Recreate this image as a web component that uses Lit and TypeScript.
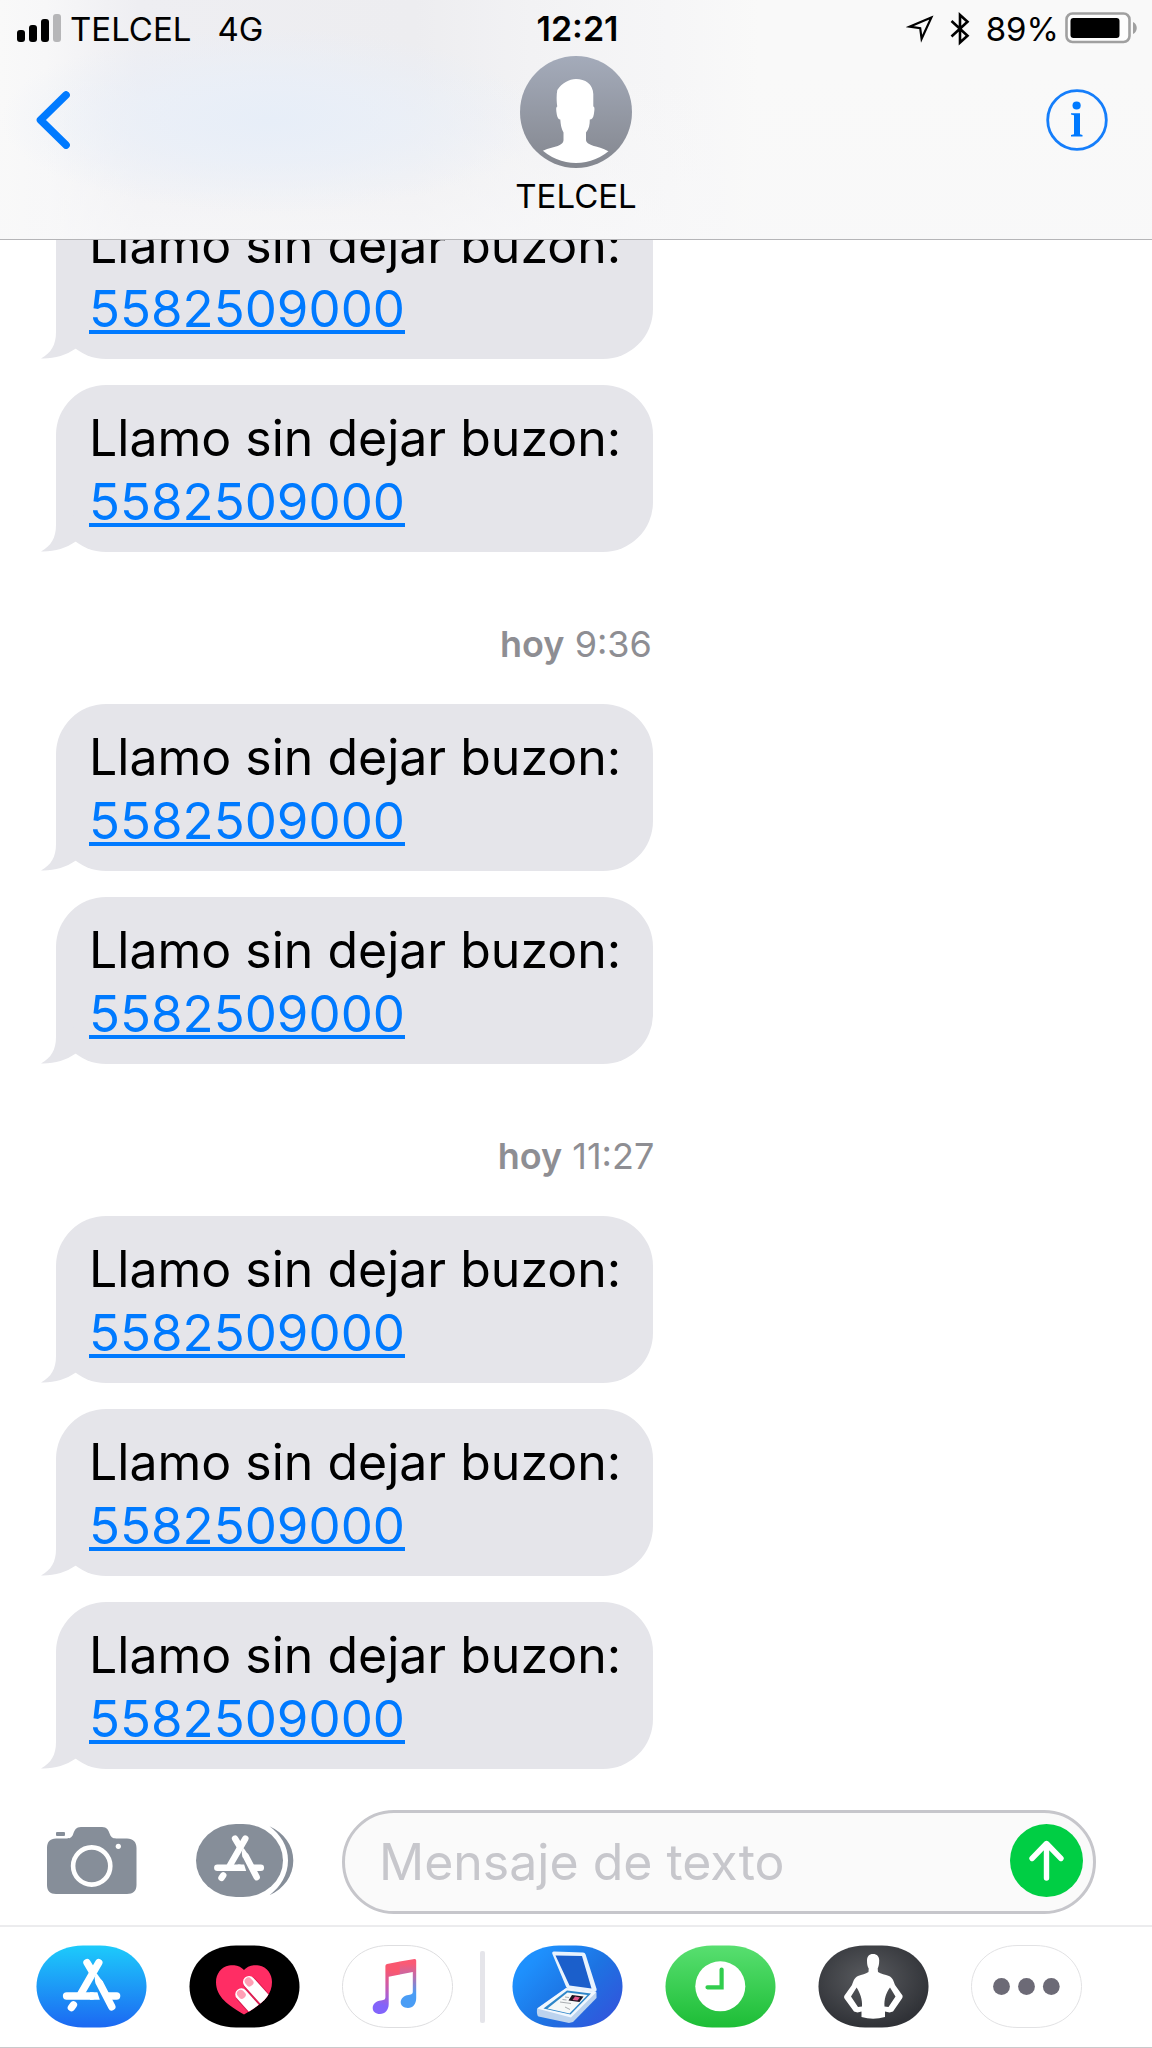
import { LitElement, html, css, svg } from "lit";
import { customElement, property } from "lit/decorators.js";

interface MessageGroup {
  day: string;
  time: string;
  messages: { text: string; phone: string }[];
}

const missedCall = { text: "Llamo sin dejar buzon:", phone: "5582509000" };

const conversation: MessageGroup[] = [
  { day: "", time: "", messages: [missedCall, missedCall] },
  { day: "hoy", time: "9:36", messages: [missedCall, missedCall] },
  { day: "hoy", time: "11:27", messages: [missedCall, missedCall, missedCall] },
];

/* Shared "A" glyph made of three crossing sticks, in 111x83 coordinates. */
const storeGlyph = svg`
  <g fill="none" stroke="#fff" stroke-width="7.4" stroke-linecap="round">
    <path d="M62.8 17.6 45 48.5" />
    <path d="M51 17.6 56 26" />
    <path d="M63.5 38 75.8 61.8" />
    <path d="M30.6 51H56" />
    <path d="M73 51H80.6" />
    <path d="M37.4 59.8 35.4 62.6" />
  </g>
  <path d="M54 47.3H61.4L63.8 54.7H54Z" fill="#fff" />
  <path d="M60.3 28.6C58.2 31.5 58.4 35.5 60 39.6L67 37.3 61 28.8Z" fill="#fff" />`;

@customElement("status-bar")
export class StatusBar extends LitElement {
  static styles = css`
    :host {
      display: grid;
      grid-template-columns: 1fr auto 1fr;
      align-items: center;
      box-sizing: border-box;
      height: 56px;
      padding: 2px 14px 0 17px;
      font-size: 33px;
      line-height: 40px;
      color: #000;
    }
    svg {
      display: block;
    }
    .left,
    .right {
      display: flex;
      align-items: center;
    }
    .left {
      gap: 8px;
    }
    .network {
      margin-left: 18px;
    }
    .clock {
      font-size: 34px;
      font-weight: 600;
    }
    .right {
      justify-content: flex-end;
      gap: 6px;
    }
    .arrow {
      margin-right: 10px;
    }
    .bluetooth {
      margin-right: 10px;
    }
  `;

  render() {
    return html`
      <div class="left">
        <svg width="45" height="30" viewBox="0 0 45 30" aria-hidden="true">
          <rect x="0" y="16" width="8" height="12" rx="3" />
          <rect x="12" y="11" width="8" height="17" rx="3" />
          <rect x="24" y="5" width="8" height="23" rx="3" />
          <rect x="36" y="0" width="8" height="28" rx="3" fill="#b6b6b8" />
        </svg>
        <span>TELCEL</span>
        <span class="network">4G</span>
      </div>
      <span class="clock">12:21</span>
      <div class="right">
        <svg class="arrow" width="28" height="28" viewBox="0 0 28 28" aria-hidden="true">
          <path d="M25.3 2.6 3.5 11.7 14.2 13.2 15.6 23.8Z" fill="none" stroke="#000" stroke-width="2.2" />
        </svg>
        <svg class="bluetooth" width="20" height="34" viewBox="0 0 20 34" aria-hidden="true">
          <path d="M1.5 9 17.5 23.7 10 30.5V3L17.5 9.7 1.5 24.5" fill="none" stroke="#000" stroke-width="2.6" />
        </svg>
        <span>89%</span>
        <svg width="73" height="34" viewBox="0 0 73 34" aria-hidden="true">
          <rect x="1.5" y="1.5" width="63" height="28.5" rx="6" fill="#fdfdfd" stroke="#a0a0a0" stroke-width="2.6" />
          <rect x="5.5" y="6" width="49" height="20" rx="3" />
          <path d="M68 10C73 12 73 20 68 22Z" fill="#a0a0a0" />
        </svg>
      </div>
    `;
  }
}

@customElement("chat-header")
export class ChatHeader extends LitElement {
  static styles = css`
    :host {
      display: block;
      border-bottom: 1px solid #b5b5b8;
      background:
        radial-gradient(ellipse 270px 92px at 270px 120px, #e7eef8 0%, #e9eff8cc 45%, #f0f1f600 100%),
        linear-gradient(to bottom, #f8f8f900 30%, #f8f8f9bb 100%),
        linear-gradient(to right, #f9f9f9 0%, #f7f7f8 4%, #eeeef2 12%, #ededf0 36%, #f2f2f4 46%, #f6f6f7 58%, #f9f9f9 66%);
    }
    svg {
      display: block;
    }
    .nav {
      display: grid;
      grid-template-columns: 1fr auto 1fr;
      padding: 0 44px 23px 36px;
    }
    button {
      display: flex;
      align-items: center;
      height: 128px;
      padding: 0;
      border: 0;
      background: none;
    }
    .info {
      justify-self: end;
    }
    .contact {
      display: flex;
      flex-direction: column;
      align-items: center;
      gap: 8px;
      margin-left: 8px;
    }
    .name {
      margin: 0;
      font-size: 33px;
      font-weight: 400;
      line-height: 40px;
      color: #000;
    }
  `;

  render() {
    return html`
      <status-bar></status-bar>
      <div class="nav">
        <button class="back" aria-label="Atrás">
          <svg width="34" height="58" viewBox="0 0 34 58">
            <path d="M30 4 4.5 29 30 54" fill="none" stroke="#007aff" stroke-width="7.6" stroke-linecap="round" stroke-linejoin="round" />
          </svg>
        </button>
        <div class="contact">
          <svg width="112" height="112" viewBox="0 0 112 112" aria-hidden="true">
            <defs>
              <linearGradient id="sky" x1="0" y1="0" x2="0" y2="1">
                <stop offset="0" stop-color="#a4abba" />
                <stop offset="1" stop-color="#84878f" />
              </linearGradient>
              <clipPath id="ring"><circle cx="56" cy="56" r="51" /></clipPath>
            </defs>
            <circle cx="56" cy="56" r="56" fill="url(#sky)" />
            <path
              clip-path="url(#ring)"
              d="M56 23C65 23 73 28 73.3 38L73.3 50.5C75 51 74.5 54 73.8 58.5 73.2 62 72 63.5 69.8 63.5 69.8 69 69 73 66 76.5L66 84C66 87 70 89 76 90.5 82 92 87 94 91 97L91 112H19V97C24 93.5 30 92 36 90.5 41 89 43.5 87 43.5 84L43.5 76.5C41.5 73 40.6 69 40.3 63.5 38.5 63.5 37.5 62 36.8 58.5 36 54 35.8 51 37.3 50.5 36.5 46 36.3 39 37.3 34 42 27 49 23 56 23Z"
              fill="#fff"
            />
          </svg>
          <h1 class="name">TELCEL</h1>
        </div>
        <button class="info" aria-label="Información">
          <svg width="62" height="62" viewBox="0 0 62 62">
            <circle cx="31" cy="31" r="29.3" fill="none" stroke="#157efb" stroke-width="2.8" />
            <circle cx="30.6" cy="16.5" r="4.1" fill="#007aff" />
            <path d="M25 24.2H34V45.2L36.5 46V47.5H25V46L28 45.2V26.2L25 25.4Z" fill="#007aff" />
          </svg>
        </button>
      </div>
    `;
  }
}

@customElement("message-bubble")
export class MessageBubble extends LitElement {
  @property() text = "";
  @property() phone = "";

  static styles = css`
    :host {
      display: block;
    }
    .bubble {
      position: relative;
      box-sizing: border-box;
      width: fit-content;
      padding: 22px 32px 19px 33px;
      border-radius: 50px;
      background: #e5e5ea;
      font-size: 50px;
      line-height: 63px;
      color: #000;
    }
    p {
      margin: 0;
    }
    .phone {
      font-size: 51px;
    }
    a {
      color: #007aff;
      text-decoration: underline;
      text-decoration-thickness: 4px;
      text-underline-offset: 3px;
      text-decoration-skip-ink: none;
    }
    .tail {
      position: absolute;
      left: -16px;
      bottom: 0;
    }
  `;

  render() {
    return html`
      <div class="bubble">
        <svg class="tail" width="52" height="52" viewBox="0 0 52 52" aria-hidden="true">
          <path d="M16 0V25C16 38 11 46 1 51.5 14 52 26 48 35 42L50 30Z" fill="#e5e5ea" />
        </svg>
        <p>${this.text}</p>
        <p class="phone"><a href="tel:${this.phone}">${this.phone}</a></p>
      </div>
    `;
  }
}

@customElement("compose-bar")
export class ComposeBar extends LitElement {
  static styles = css`
    :host {
      display: block;
    }
    svg {
      display: block;
    }
    form {
      display: flex;
      align-items: center;
      padding: 41px 56px 11px 47px;
    }
    button {
      flex: none;
      padding: 0;
      border: 0;
      background: none;
    }
    .drawer {
      margin: 0 48px 0 59px;
    }
    .field {
      display: flex;
      flex: 1;
      align-items: center;
      box-sizing: border-box;
      min-width: 0;
      height: 104px;
      padding: 0 10px 0 34px;
      border: 3px solid #c6c6cb;
      border-radius: 52px;
      background: #fafafa;
    }
    input {
      flex: 1;
      min-width: 0;
      padding: 0;
      border: 0;
      outline: 0;
      background: none;
      font: inherit;
      font-size: 50px;
      line-height: 64px;
      color: #000;
    }
    input::placeholder {
      color: #c7c7cc;
      opacity: 1;
    }
  `;

  render() {
    return html`
      <form @submit=${(e: Event) => e.preventDefault()}>
        <button type="button" aria-label="Cámara">
          <svg width="90" height="70" viewBox="0 0 90 70">
            <path
              d="M9 11.5H18C23 11.5 24.5 11 26 7.5 27.5 3 29 0 34 0H55C60 0 61.5 3 63 7.5 64.5 11 66 11.5 71 11.5H80C86 11.5 89.5 15 89.5 21V58C89.5 64 86 67 80 67H9C3 67 0 64 0 58V21C0 15 3 11.5 9 11.5Z"
              fill="#868e99"
            />
            <rect x="9" y="5" width="9" height="4" rx="1" fill="#868e99" />
            <circle cx="44.7" cy="39" r="18.6" fill="none" stroke="#fff" stroke-width="4.6" />
            <circle cx="71.3" cy="19.3" r="2.6" fill="#fff" />
          </svg>
        </button>
        <button class="drawer" type="button" aria-label="Apps">
          <svg width="98" height="76" viewBox="0 0 98 76">
            <rect width="87" height="73" rx="40" ry="36.5" fill="#868e99" />
            <path d="M73.5 2.2C88 9 97.3 21 97.3 36.5S88 64.5 73.5 71.2C84.5 62.5 92 51 92 36.5S84.5 10.5 73.5 2.2Z" fill="#868e99" />
            <g transform="translate(-5.3 -0.7) scale(0.87)">${storeGlyph}</g>
          </svg>
        </button>
        <div class="field">
          <input type="text" aria-label="Mensaje de texto" placeholder="Mensaje de texto" />
          <button type="submit" aria-label="Enviar">
            <svg width="73" height="76" viewBox="0 0 73 76">
              <circle cx="36.5" cy="36.5" r="36.5" fill="#00ce44" />
              <path d="M36.5 54V21M22 34.5 36.5 19.5 51 34.5" fill="none" stroke="#fff" stroke-width="5.4" stroke-linecap="round" stroke-linejoin="round" />
            </svg>
          </button>
        </div>
      </form>
    `;
  }
}

const pill = (fill: string, stroke = "none") => svg`
  <path
    d="M47 .5H64C93 .5 110.500 20 110.500 41.500S93 82.500 64 82.500H47C18 82.500 .5 63 .5 41.500S18 .5 47 .5Z"
    fill=${fill}
    stroke=${stroke}
  />`;

@customElement("app-strip")
export class AppStrip extends LitElement {
  static styles = css`
    :host {
      display: flex;
      align-items: center;
      gap: 27px;
      padding: 18px 36px 19px;
      border-top: 2px solid #ececee;
      border-bottom: 1px solid #c9c9cb;
    }
    svg {
      display: block;
    }
    .group {
      display: flex;
      gap: 42px;
    }
    .divider {
      width: 5px;
      height: 72px;
      border-radius: 2px;
      background: #e5e5ea;
    }
    button {
      padding: 0;
      border: 0;
      background: none;
    }
  `;

  private icon(label: string, art: unknown) {
    return html`
      <button aria-label=${label}>
        <svg width="111" height="83" viewBox="0 0 111 83">${art}</svg>
      </button>
    `;
  }

  render() {
    const store = svg`
      <defs>
        <linearGradient id="store" x1="0" y1="0" x2="0" y2="1">
          <stop offset="0" stop-color="#1dcbfb" />
          <stop offset="1" stop-color="#1c68f2" />
        </linearGradient>
      </defs>
      ${pill("url(#store)")}${storeGlyph}`;

    const heart = svg`
      <defs>
        <clipPath id="heart">
          <path d="M55 25C60 19.500 66 20 70 20.500 78 22 83 29 83 37 83 52 71 60 55 69.500 39 60 27 52 27 37 27 29 32 22 40 20.500 44 20 50 19.500 55 25Z" />
        </clipPath>
      </defs>
      ${pill("#000")}
      <g clip-path="url(#heart)">
        <rect x="20" y="15" width="70" height="60" fill="#ff2d64" />
        <g transform="rotate(-42 60 37)">
          <rect x="53" y="32" width="14" height="50" rx="7" fill="#d91d50" />
          <rect x="54" y="31" width="12" height="50" rx="6" fill="#fff" />
          <path d="M56.300 36A3.700 3.700 0 0 1 63.700 36V39A3.700 2.500 0 0 1 56.300 39Z" fill="#ff9fb5" />
          <rect x="39" y="36" width="14" height="50" rx="7" fill="#d91d50" />
          <rect x="40" y="35" width="12" height="50" rx="6" fill="#fff" />
          <path d="M42.300 40A3.700 3.700 0 0 1 49.700 40V43A3.700 2.500 0 0 1 42.300 43Z" fill="#ff9fb5" />
        </g>
      </g>`;

    const music = svg`
      <defs>
        <linearGradient id="noteLeft" gradientUnits="userSpaceOnUse" x1="50" y1="14" x2="36" y2="68">
          <stop offset="0.200" stop-color="#f9576f" />
          <stop offset="0.550" stop-color="#c25cb8" />
          <stop offset="0.850" stop-color="#8264fb" />
        </linearGradient>
        <linearGradient id="noteRight" gradientUnits="userSpaceOnUse" x1="0" y1="14" x2="0" y2="60">
          <stop offset="0.100" stop-color="#fa5a75" />
          <stop offset="0.350" stop-color="#c469a8" />
          <stop offset="0.750" stop-color="#4a9df5" />
        </linearGradient>
      </defs>
      ${pill("#fff", "#dedee0")}
      <path d="M45 19 58 16.500V29.500L46.700 31.800V59C46.700 65 43 69 38 69 33.500 69 30.700 66.500 30.700 63 30.700 59 34 56 39 55.500 42.500 55.200 43.400 54 43.400 52V21Q43.400 19.400 45 19Z" fill="url(#noteLeft)" />
      <path d="M57.800 16.500 72.500 14Q74.200 13.800 74.200 15.500V53C74.200 59 71 63 66 63 61.500 63 58.700 60.500 58.700 57.300 58.700 53.500 62 50.500 66.500 50 70 49.600 70.800 48.500 70.800 46.500V27L57.800 29.500Z" fill="url(#noteRight)" />`;

    const scanner = svg`
      <defs>
        <linearGradient id="scan" x1="0.100" y1="0.300" x2="0.900" y2="0.900">
          <stop offset="0" stop-color="#1e90fd" />
          <stop offset="0.500" stop-color="#1d73e2" />
          <stop offset="1" stop-color="#3156dc" />
        </linearGradient>
      </defs>
      ${pill("url(#scan)")}
      <path d="M42 6.500 71 7.500Q73 7.700 73.600 9.500L84.600 44Q85 47.500 81 47L56.500 44Q55 43.600 54.200 42L40.400 9Q39.600 6.600 42 6.500Z" fill="#e9f3fd" />
      <path d="M43.500 10.500 70 11 79.500 43.500 57.500 40.500Z" fill="#1b5fcb" />
      <path d="M25 64 54 43.500 84.500 47.500V53L61 77 57 78 26.500 71.500Q24.500 70.500 25 64Z" fill="#bcd3ee" />
      <path d="M25 63.500 54 43 84.500 47 59 72.500Z" fill="#f1f7fe" />
      <path d="M31.500 63.500 55 45.500 79 48.500 58.500 69.500Z" fill="#2e86c9" />
      <path d="M35.500 63.500 55.500 47.500 75.500 50 57.500 68.500Z" fill="#f6f8f8" />
      <path d="M60 50 71.500 51.500 67.500 57 56.500 55.500Z" fill="#1c1320" />
      <path d="M63 51.500 68 52.500 65.500 55.500 60.500 55Z" fill="#e4588d" />
      <path d="M53 52 57 52.500M50.500 54.500 54.500 55M48 57 59 58.500M53 62 58 64.500" stroke="#a9adb1" stroke-width="1" />`;

    const clock = svg`
      <defs>
        <linearGradient id="recent" x1="0" y1="0" x2="0" y2="1">
          <stop offset="0" stop-color="#58df70" />
          <stop offset="1" stop-color="#1dbd36" />
        </linearGradient>
      </defs>
      ${pill("url(#recent)")}
      <circle cx="55.300" cy="41.300" r="25" fill="#fff" />
      <path d="M56.600 24.500V42.300H42.500" fill="none" stroke="#31cd4d" stroke-width="4.200" stroke-linecap="round" />`;

    const athlete = svg`
      <defs>
        <radialGradient id="gym" cx="0.450" cy="0.400" r="0.600">
          <stop offset="0" stop-color="#5a5c60" />
          <stop offset="1" stop-color="#303237" />
        </radialGradient>
      </defs>
      ${pill("url(#gym)")}
      <path
        fill="#fff"
        fill-rule="evenodd"
        d="M55 9C59 9 61.200 11.500 61.200 15.500 61.200 19.500 60.500 21.500 59.700 23.500L60 27C63 29 67 29.500 71 31 75 33 75.500 36 77 40L84.500 50.500Q85 52 84 53.500L75 66.500 71.500 67.500 67 66.500 67 72Q55 75.500 43.500 72L43.500 66.500 39.500 67.500 36 66.500 26.500 53.500Q25.500 52 26.500 50.500L34 40C35.500 36 36 33 40 31 44 29.500 47.500 29 50.500 27L50.700 23.500C49.500 21.500 49 19.500 49 15.500 49 11.500 51 9 55 9ZM38.600 42.500 33 51.500 40 62 44 61.500C44.500 54 42 48 38.600 42.500ZM72 42.500C68 48 66 54 66.500 61.500L70.500 62 77.500 51.500Z"
      />`;

    const more = svg`
      ${pill("#fff", "#e2e2e4")}
      <g fill="#6c6a76">
        <circle cx="30.500" cy="41.500" r="8.400" />
        <circle cx="55.500" cy="41.500" r="8.400" />
        <circle cx="80.300" cy="41.500" r="8.400" />
      </g>`;

    return html`
      <div class="group">
        ${this.icon("App Store", store)} ${this.icon("Digital Touch", heart)} ${this.icon("Música", music)}
      </div>
      <div class="divider"></div>
      <div class="group">
        ${this.icon("Escáner", scanner)} ${this.icon("Recientes", clock)} ${this.icon("Ejercicio", athlete)}
        ${this.icon("Más", more)}
      </div>
    `;
  }
}

@customElement("app-root")
export class AppRoot extends LitElement {
  static styles = css`
    :host {
      display: flex;
      flex-direction: column;
      height: 100vh;
      overflow: hidden;
      background: #fff;
      font-family: Inter, "Liberation Sans", sans-serif;
    }
    chat-header,
    compose-bar,
    app-strip {
      flex: none;
    }
    .scroller {
      display: flex;
      flex: 1;
      flex-direction: column-reverse;
      min-height: 0;
      overflow-y: auto;
      scrollbar-width: none;
    }
    .thread {
      flex: none;
    }
    .group {
      display: flex;
      flex-direction: column;
      gap: 26px;
      padding-left: 56px;
    }
    .stamp {
      margin: 0;
      padding: 72px 0 40px;
      font-size: 36px;
      line-height: 40px;
      text-align: center;
      color: #8e8e93;
    }
    .day {
      font-weight: 600;
    }
  `;

  render() {
    return html`
      <chat-header></chat-header>
      <main class="scroller">
        <div class="thread">
          ${conversation.map(
            (group) => html`
              ${group.day ? html`<p class="stamp"><span class="day">${group.day}</span> ${group.time}</p>` : ""}
              <div class="group">
                ${group.messages.map((m) => html`<message-bubble .text=${m.text} .phone=${m.phone}></message-bubble>`)}
              </div>
            `,
          )}
        </div>
      </main>
      <compose-bar></compose-bar>
      <app-strip></app-strip>
    `;
  }
}
